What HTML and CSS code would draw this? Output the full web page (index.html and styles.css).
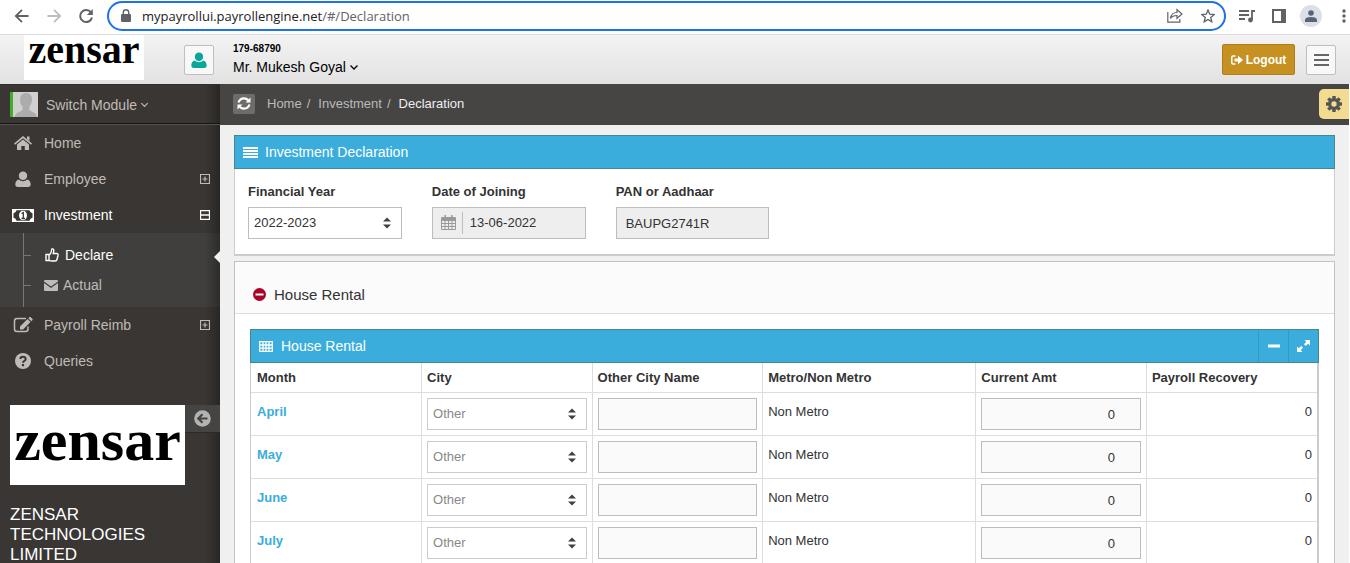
FILE: index.html
```html
<!DOCTYPE html>
<html lang="en">
<head>
<meta charset="utf-8">
<title>Investment Declaration</title>
<link rel="stylesheet" href="styles.css">
</head>
<body>
<svg class="sprite" aria-hidden="true">
  <symbol id="chev" viewBox="0 0 10 10"><path d="M1.5 3.5 5 7l3.5-3.5" fill="none" stroke="currentColor" stroke-width="1.3"/></symbol>
  <symbol id="user" viewBox="0 0 16 16"><path d="M8 .5c2.400 0 4.200 1.800 4.200 4.200S10.400 9 8 9 3.800 7.200 3.800 4.700 5.600.5 8 .5zM4 8.600C5 9.600 6.500 10.200 8 10.200s3-.6 4-1.600c2.500.2 3.700 2.600 3.700 5 0 1.500-1 2.400-2.400 2.400H2.700C1.300 16 .3 15.100.3 13.600c0-2.400 1.200-4.800 3.700-5z" fill="currentColor"/></symbol>
  <symbol id="plus" viewBox="0 0 10 10"><path d="M.5.5h9v9h-9zM5 2.500v5M2.500 5h5" fill="none" stroke="currentColor" stroke-width="1.2"/></symbol>
  <symbol id="minus" viewBox="0 0 10 10"><path d="M.5.5h9v9h-9zM1 5h8" fill="none" stroke="currentColor" stroke-width="1.300"/></symbol>
  <symbol id="sort" viewBox="0 0 8 12"><path d="M0 4.500 4 .5l4 4zM0 7.500h8l-4 4z" fill="#404040"/></symbol>
</svg>

<header class="browser">
  <button class="bicon" aria-label="Back"><svg width="16" height="16" viewBox="0 0 16 16"><path d="M14.500 8H2M8 1.800 1.800 8 8 14.200" fill="none" stroke="#5f6368" stroke-width="1.800"/></svg></button>
  <button class="bicon" aria-label="Forward"><svg width="16" height="16" viewBox="0 0 16 16"><path d="M1.500 8H14M8 1.800 14.200 8 8 14.200" fill="none" stroke="#bcbec1" stroke-width="1.800"/></svg></button>
  <button class="bicon" aria-label="Reload"><svg width="16" height="16" viewBox="0 0 16 16"><path d="M13 4.500A6 6 0 1 0 14 9.500" fill="none" stroke="#5f6368" stroke-width="2"/><path d="M14.800 1v6H8.800z" fill="#5f6368"/></svg></button>
  <div class="address">
    <svg width="10" height="13" viewBox="0 0 10 13"><path d="M1 5h8q1 0 1 1v6q0 1-1 1H1q-1 0-1-1V6q0-1 1-1z" fill="#5f6368"/><path d="M2.300 5.500V3.500a2.700 2.700 0 0 1 5.400 0v2" fill="none" stroke="#5f6368" stroke-width="1.400"/></svg>
    <p class="url">mypayrollui.payrollengine.net<span>/#/Declaration</span></p>
    <svg width="16" height="15" viewBox="0 0 16 15"><path d="M.8 4v10.200h12V11M3.500 10.500c.5-4 3-6 6.500-6V1.500l5 4.500-5 4.500v-3c-3 0-5 .7-6.500 3z" fill="none" stroke="#5f6368" stroke-width="1.200"/></svg>
    <svg width="14" height="14" viewBox="0 0 14 14"><path d="M7 1l1.700 4.200 4.500.3-3.500 2.900 1.100 4.400L7 10.400l-3.800 2.400 1.100-4.400L.8 5.500l4.500-.3z" fill="none" stroke="#5f6368" stroke-width="1.300"/></svg>
  </div>
  <svg class="media" width="16" height="14" viewBox="0 0 16 14"><path d="M0 2h10M0 6h10M0 10h6M13 11V2h3" fill="none" stroke="#5f6368" stroke-width="1.800"/><circle cx="11.500" cy="11" r="2.400" fill="#5f6368"/></svg>
  <svg class="panel" width="14" height="14" viewBox="0 0 14 14"><path d="M1 1h12v12H1z" fill="none" stroke="#5f6368" stroke-width="2"/><path d="M9 0h5v14H9z" fill="#5f6368"/></svg>
  <span class="profile"><svg width="12" height="12" viewBox="0 0 12 12"><circle cx="6" cy="3" r="2.800" fill="#5a6478"/><path d="M0 12v-2q0-3 6-3t6 3v2z" fill="#5a6478"/></svg></span>
  <svg class="dots" width="4" height="14" viewBox="0 0 4 14"><g fill="#5f6368"><circle cx="2" cy="2" r="1.700"/><circle cx="2" cy="7" r="1.700"/><circle cx="2" cy="12" r="1.700"/></g></svg>
</header>

<div class="topbar">
  <div class="brand">zensar</div>
  <button class="square avatar" aria-label="Profile"><svg width="16" height="16"><use href="#user"/></svg></button>
  <div class="who">
    <strong>179-68790</strong>
    <button class="name">Mr. Mukesh Goyal <svg width="10" height="10"><use href="#chev"/></svg></button>
  </div>
  <button class="logout"><svg width="12" height="10" viewBox="0 0 12 10"><path d="M4.500 1H2Q.8 1 .8 2.200v5.600Q.8 9 2 9h2.500" fill="none" stroke="#fff" stroke-width="1.500"/><path d="M3.500 3.500H7V.8L12 5 7 9.200V6.500H3.500z" fill="#fff"/></svg>Logout</button>
  <button class="square" aria-label="Menu"><svg width="15" height="12" viewBox="0 0 15 12"><path d="M0 1h15M0 6h15M0 11h15" stroke="#666" stroke-width="2"/></svg></button>
</div>

<div class="shell">
  <aside class="sidebar">
    <button class="module">
      <svg width="28" height="25" viewBox="0 0 28 25"><path d="M0 0h28v25H0z" fill="#d0d0d0"/><path d="M0 0h3v25H0z" fill="#3fae29"/><path d="M16 1c4 0 6 2.500 6 6.500 0 3-1.200 5.500-2.600 7v3.500c1.600 2 6.600 2 7.600 7H4.500c1-5 6.500-5 8-7v-3.500C11 13 10 10.500 10 7.500 10 3.500 12 1 16 1z" fill="#acacac"/></svg>
      <span>Switch Module <svg width="9" height="9"><use href="#chev"/></svg></span>
    </button>
    <nav>
      <a class="item" href="#home"><svg width="18" height="16" viewBox="0 0 18 16"><path d="M9 1 18 8.500l-1 1.200L9 3.200 1 9.700 0 8.500zM13 1.500h2.500V6L13 4zM9 4.600l6 5V15h-4.200v-4H7.300v4H3V9.600z" fill="currentColor"/></svg><span>Home</span></a>
      <a class="item" href="#employee"><svg width="16" height="16"><use href="#user"/></svg><span>Employee</span><svg width="10" height="10"><use href="#plus"/></svg></a>
      <a class="item active" href="#investment"><svg width="22" height="13" viewBox="0 0 22 13"><path fill-rule="evenodd" d="M0 0h22v13H0zM4.500 1.300Q4 4 1.500 4.300v4.400Q4 9 4.500 11.700h13Q18 9 20.500 8.700V4.300Q18 4 17.500 1.300z" fill="currentColor"/><ellipse cx="11" cy="6.500" rx="4" ry="4.800" fill="currentColor"/><path d="M9.500 4.500 11.300 3.500v6M9.500 9.500h3.500" fill="none" stroke="#3a3633" stroke-width="1.300"/></svg><span>Investment</span><svg width="10" height="10"><use href="#minus"/></svg></a>
      <div class="submenu">
        <a class="active" href="#declare"><svg width="14" height="14" viewBox="0 0 14 14"><path d="M1 6.500h3V12.500H1zM4 7C6 6 6.500 3.500 6.800 1q2.200-.5 2 2L8.200 5.500h3.500q1.700.2 1.300 2l-1 4q-.3 1.500-2 1.500H7q-1.500 0-3-.7" fill="none" stroke="currentColor" stroke-width="1.400"/></svg>Declare</a>
        <a href="#actual"><svg width="14" height="11" viewBox="0 0 14 11"><path d="M0 1Q0 0 1 0h12q1 0 1 1v.5L7 6.500 0 1.500zM0 3l7 5 7-5v7q0 1-1 1H1q-1 0-1-1z" fill="currentColor"/></svg>Actual</a>
      </div>
      <a class="item" href="#reimb"><svg width="20" height="16" viewBox="0 0 20 16"><path d="M13 1.500H4Q1.500 1.500 1.500 4v8Q1.500 14.500 4 14.500h8.500Q15 14.500 15 12V9.500" fill="none" stroke="currentColor" stroke-width="1.500"/><path d="M7 9.500 14.500 2l3 3L10 12.500H7zM15.300 1.200 16.500 0q.5-.3 1 0l2 2q.3.500 0 1l-1.200 1.200z" fill="currentColor"/></svg><span>Payroll Reimb</span><svg width="10" height="10"><use href="#plus"/></svg></a>
      <a class="item" href="#queries"><svg width="16" height="16" viewBox="0 0 16 16"><circle cx="8" cy="8" r="8" fill="currentColor"/><path d="M5.300 6Q5.500 3.800 8 3.800T10.700 6Q10.700 7.200 9.400 7.900 8 8.600 8 9.800" fill="none" stroke="#3a3633" stroke-width="2"/><path d="M6.900 11h2.200v2.200H6.900z" fill="#3a3633"/></svg><span>Queries</span></a>
    </nav>
    <div class="company">
      <div class="biglogo">zensar</div>
      <button class="collapse" aria-label="Collapse menu"><svg width="17" height="17" viewBox="0 0 17 17"><circle cx="8.500" cy="8.500" r="8.300" fill="#b3b3b3"/><path d="M13.500 8.500H5M8.500 4.300 4.300 8.500l4.200 4.200" fill="none" stroke="#454443" stroke-width="2.200"/></svg></button>
    </div>
    <p class="cname">ZENSAR TECHNOLOGIES LIMITED</p>
  </aside>

  <main class="main">
    <div class="ribbon">
      <button class="refresh" aria-label="Refresh"><svg width="14" height="13" viewBox="0 0 14 13"><path d="M1.500 5.500Q3 1.300 7 1.300q2.500 0 4.300 2M12.500 7.500Q11 11.700 7 11.700q-2.500 0-4.300-2" fill="none" stroke="#fff" stroke-width="2.200"/><path d="M13.500.5v5h-5zM.5 12.500v-5h5z" fill="#fff"/></svg></button>
      <ol><li><a href="#home">Home</a></li><li><a href="#investment">Investment</a></li><li class="here">Declaration</li></ol>
      <button class="gear" aria-label="Settings"><svg width="16" height="16" viewBox="0 0 16 16"><g fill="#555"><path id="tooth" d="M6.300 0h3.400v16H6.300z"/><use href="#tooth" transform="rotate(45 8 8)"/><use href="#tooth" transform="rotate(90 8 8)"/><use href="#tooth" transform="rotate(135 8 8)"/><circle cx="8" cy="8" r="6"/></g><circle cx="8" cy="8" r="2.700" fill="#f3dc92"/></svg></button>
    </div>
    <div class="content">
      <section class="card">
        <h1 class="bar"><svg width="15" height="11" viewBox="0 0 15 11"><path d="M0 1h15M0 4h15M0 7h15M0 10h15" stroke="#fff" stroke-width="2"/></svg>Investment Declaration</h1>
        <form class="fields">
          <div class="field"><label for="fy">Financial Year</label><div class="pick"><select id="fy"><option>2022-2023</option></select><svg width="8" height="12"><use href="#sort"/></svg></div></div>
          <div class="field"><label for="doj">Date of Joining</label><div class="date"><svg width="15" height="15" viewBox="0 0 15 15"><path d="M.5 2.500h14v12H.5zM1 5.500h13M1 8.500h13M1 11.500h13M4 5v9M7.500 5v9M11 5v9" fill="none" stroke="#999"/><path d="M3.500 0h1.500v4H3.500zM10 0h1.500v4H10zM1 2.500h13V5H1z" fill="#999"/></svg><input id="doj" value="13-06-2022" readonly></div></div>
          <div class="field"><label for="pan">PAN or Aadhaar</label><input class="box" id="pan" value="BAUPG2741R" readonly></div>
        </form>
      </section>
      <section class="panelbox">
        <h2><svg width="13" height="13" viewBox="0 0 13 13"><circle cx="6.500" cy="6.500" r="6.500" fill="#a90329"/><path d="M2.500 5.500h8v2h-8z" fill="#fff"/></svg>House Rental</h2>
        <div class="inner">
          <h3 class="bar"><svg width="14" height="11" viewBox="0 0 14 11"><path d="M.7.700h12.600v9.600H.7zM.7 4h12.600M.7 7.200h12.600M4 .7v9.600M7 .7v9.600M10 .7v9.600" fill="none" stroke="#fff" stroke-width="1.300"/></svg><span>House Rental</span>
            <button aria-label="Collapse"><svg width="12" height="12" viewBox="0 0 12 12"><path d="M0 4.500h12v3H0z" fill="#fff"/></svg></button>
            <button aria-label="Expand"><svg width="13" height="12" viewBox="0 0 13 12"><path d="M7.500 0H13v5.500l-1.800-1.800L8.800 6 7 4.200l2.300-2.400zM0 6.500l1.800 1.800L4.200 6 6 7.800l-2.300 2.400L5.500 12H0z" fill="#fff"/></svg></button>
          </h3>
          <div class="tablewrap">
          <table>
            <colgroup><col><col><col><col class="wide"><col><col></colgroup>
            <thead><tr><th>Month</th><th>City</th><th>Other City Name</th><th>Metro/Non Metro</th><th>Current Amt</th><th>Payroll Recovery</th></tr></thead>
            <tbody>
              <tr><td class="txt"><a href="#april">April</a></td><td><div class="pick"><select aria-label="April city" disabled><option>Other</option></select><svg width="8" height="12"><use href="#sort"/></svg></div></td><td><input class="box pale" aria-label="April other city" readonly></td><td class="txt">Non Metro</td><td><input class="box pale amt" aria-label="April amount" value="0" readonly></td><td class="txt num">0</td></tr>
              <tr><td class="txt"><a href="#may">May</a></td><td><div class="pick"><select aria-label="May city" disabled><option>Other</option></select><svg width="8" height="12"><use href="#sort"/></svg></div></td><td><input class="box pale" aria-label="May other city" readonly></td><td class="txt">Non Metro</td><td><input class="box pale amt" aria-label="May amount" value="0" readonly></td><td class="txt num">0</td></tr>
              <tr><td class="txt"><a href="#june">June</a></td><td><div class="pick"><select aria-label="June city" disabled><option>Other</option></select><svg width="8" height="12"><use href="#sort"/></svg></div></td><td><input class="box pale" aria-label="June other city" readonly></td><td class="txt">Non Metro</td><td><input class="box pale amt" aria-label="June amount" value="0" readonly></td><td class="txt num">0</td></tr>
              <tr><td class="txt"><a href="#july">July</a></td><td><div class="pick"><select aria-label="July city" disabled><option>Other</option></select><svg width="8" height="12"><use href="#sort"/></svg></div></td><td><input class="box pale" aria-label="July other city" readonly></td><td class="txt">Non Metro</td><td><input class="box pale amt" aria-label="July amount" value="0" readonly></td><td class="txt num">0</td></tr>
            </tbody>
          </table>
          </div>
        </div>
      </section>
    </div>
  </main>
</div>
</body>
</html>
```
FILE: styles.css
```css
* { box-sizing: border-box; }
body {
  margin: 0;
  height: 100vh;
  overflow: hidden;
  display: flex;
  flex-direction: column;
  font: 13px/20px "Liberation Sans", Arial, sans-serif;
  color: #333;
  background: #fff;
}
button, input, select { font: inherit; color: inherit; margin: 0; }
button { border: 0; padding: 0; background: none; display: flex; align-items: center; justify-content: center; }
a { text-decoration: none; color: inherit; }
svg { flex: none; }
.sprite { position: absolute; width: 0; height: 0; }

/* Browser toolbar */
.browser { flex: none; display: flex; align-items: center; height: 35px; padding: 0 4px 3px 14px; border-bottom: 1px solid #dadce0; }
.bicon { margin-right: 16px; }
.bicon:nth-child(3) { margin-right: 13px; }
.address { flex: 1; display: flex; align-items: center; height: 30px; padding: 0 9px 0 12px; border: 2px solid #1a73e8; border-radius: 15px; gap: 18px; }
.url { flex: 1; margin: 0 0 0 -7px; font: 13px/20px "Open Sans", "Noto Sans", sans-serif; color: #202124; }
.url span { color: #5f6368; }
.media { margin-left: 13px; }
.panel { margin-left: 17px; }
.profile { display: flex; align-items: center; justify-content: center; width: 22px; height: 22px; margin: 0 20px 0 14px; border-radius: 50%; background: #dcdfe5; }

/* Application header */
.topbar { flex: none; display: flex; align-items: center; height: 49px; padding: 0 14px 0 24px; background: linear-gradient(#f3f3f3, #e2e2e2); }
.brand { align-self: flex-start; width: 120px; height: 45px; background: #fff; color: #000; font: bold 40px/30px "Liberation Serif", serif; text-align: center; }
.square { width: 30px; height: 30px; border: 1px solid #bfbfbf; border-radius: 2px; background: #f8f8f8; }
.avatar { margin-left: 40px; color: #0aa699; }
.who { flex: 1; margin-left: 19px; color: #000; }
.who strong { display: block; font-size: 10px; line-height: 14px; }
.name { gap: 3px; font-size: 14px; line-height: 22px; }
.logout { gap: 3px; width: 73px; height: 31px; margin-right: 11px; border: 1px solid #b07d1a; border-radius: 2px; background: #c79121; color: #fff; font-size: 12px; font-weight: bold; }

.shell { flex: 1; min-height: 0; display: flex; padding-right: 1px; }

/* Sidebar */
.sidebar { flex: none; width: 220px; overflow: hidden; font-size: 14px; color: #c0bbb7; background: linear-gradient(to right, transparent 205px, rgba(0, 0, 0, .3)), #3a3633; }
.module { width: 100%; height: 41px; padding-left: 10px; justify-content: flex-start; gap: 8px; border: 1px solid #312e2b; border-left: 0; border-right: 0; border-bottom: 1px solid #56524e; box-shadow: inset 0 -1px #161412; }
.module span { display: flex; align-items: center; gap: 3px; }
.item { display: flex; align-items: center; height: 36px; padding: 0 10px 0 44px; }
.item svg:first-child { width: 22px; margin-left: -32px; margin-right: 10px; }
.item span { flex: 1; }
.active { color: #fff; }
.submenu { position: relative; height: 74px; padding: 7px 0 7px 23px; background: linear-gradient(to right, transparent 205px, rgba(0, 0, 0, .3)), #403f3d; }
.submenu::before { content: ""; position: absolute; left: 23px; top: 0; bottom: 0; border-left: 1px solid #7a7673; }
.submenu::after { content: ""; position: absolute; right: 0; top: 18px; border: 6px solid transparent; border-right-color: #f1f1f1; border-left: 0; }
.submenu a { display: flex; align-items: center; height: 30px; gap: 6px; }
.submenu a + a { gap: 5px; }
.submenu a::before { content: ""; width: 8px; margin-right: 8px; border-top: 1px solid #7a7673; }
.company { display: flex; align-items: flex-start; margin: 26px 0 20px 10px; }
.biglogo { width: 175px; height: 80px; background: #fff; color: #000; font: bold 60px/70px "Liberation Serif", serif; text-align: center; }
.collapse { flex: 1; height: 28px; background: #454443; border-bottom: 1px solid #2c2a28; }
.cname { width: 160px; margin: 0 0 0 10px; font-size: 17px; line-height: 20px; color: #fff; }

/* Main area */
.main { flex: 1; min-width: 0; background: #f0f0f0; }
.ribbon { display: flex; align-items: center; height: 41px; padding: 0 0 2px 13px; background: #474544; color: #bababa; }
.refresh { width: 22px; height: 20px; border-radius: 2px; background: #6e6c6b; margin-right: 12px; }
.ribbon ol { flex: 1; display: flex; margin: 0; padding: 0; list-style: none; }
.ribbon li + li::before { content: "/"; padding: 0 8px 0 5px; }
.ribbon .here { color: #eee; }
.ribbon .here::before { color: #bababa; }
.gear { width: 30px; height: 30px; border-radius: 5px 0 0 5px; background: #f3dc92; }
.content { padding: 10px 14px 0; }
.card { border: 1px solid #ccc; border-top: 0; border-bottom-width: 2px; background: #fff; }
.bar { display: flex; align-items: center; height: 34px; margin: 0; padding-left: 8px; gap: 8px; border: 1px solid #4c8585; background: #3baddc; color: #fff; font-size: 14px; font-weight: normal; }
.card .bar { margin: 0 -1px; gap: 7px; }
.fields { display: grid; grid-template-columns: repeat(6, 1fr); gap: 30px; padding: 13px 13px 15px; }
.field { min-width: 0; }
.field label { display: block; margin-bottom: 5px; font-weight: bold; }
.pick { display: grid; align-items: center; }
.pick > * { grid-area: 1 / 1; }
.pick svg { justify-self: end; margin-right: 11px; pointer-events: none; }
.pick select, .box, .date { display: block; width: 100%; height: 32px; border: 1px solid #bdbdbd; border-radius: 0; background: #fff; }
.pick select { appearance: none; padding: 0 5px; }
.pick select:disabled { color: #888; border-color: #ccc; opacity: 1; }
.box { padding: 0 9px; background: #eee; }
.pale { background: #fafafa; }
.pick select, .date { padding-bottom: 1px; }
.date { display: flex; align-items: center; padding-left: 8px; background: #eee; }
.date input { flex: 1; min-width: 0; height: 22px; margin-left: 6px; padding: 0 7px; border: 0; border-left: 1px solid #bdbdbd; background: none; }

.panelbox { margin-top: 5px; border: 1px solid #c2c2c2; background: #fff; }
.panelbox h2 { display: flex; align-items: center; gap: 8px; margin: 0; height: 52px; padding: 14px 0 0 18px; border-bottom: 1px solid #ddd; background: #fbfbfb; font-size: 15px; font-weight: normal; }
.inner { padding: 15px; }
.inner .bar { gap: 0; }
.inner .bar span { flex: 1; padding-left: 8px; }
.inner .bar button { align-self: stretch; width: 30px; border-left: 1px solid #3498c2; }
.tablewrap { border: 1px solid #ccc; border-top: 0; border-right-width: 2px; }
table { width: 100%; table-layout: fixed; border-collapse: collapse; }
col { width: 16%; }
col.wide { width: 20%; }
th, td { border: 1px solid #ddd; padding: 5px; text-align: left; vertical-align: top; }
th { padding: 5px 5px 4px; }
table tr > :first-child { border-left: 0; padding-left: 6px; }
tr > :last-child { border-right: 0; }
thead th { border-top: 0; }
td.txt { padding-top: 9px; padding-bottom: 4px; }
td a { font-weight: bold; color: #3baddc; }
.amt { text-align: right; padding-right: 25px; }
.num { text-align: right; }
```
